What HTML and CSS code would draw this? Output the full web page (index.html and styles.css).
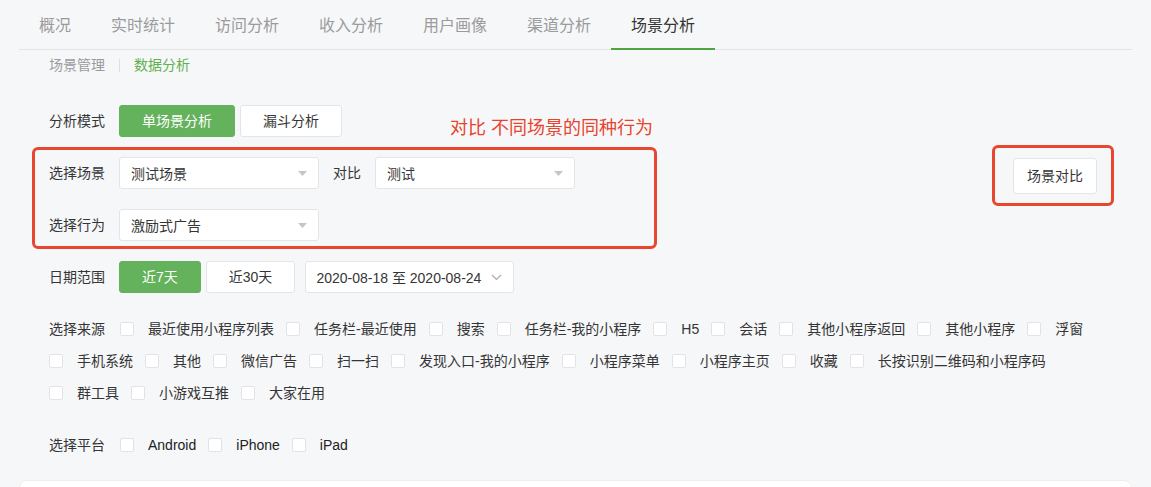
FILE: index.html
```html
<!DOCTYPE html>
<html lang="zh-CN">
<head>
<meta charset="utf-8">
<title>场景分析</title>
<link rel="stylesheet" href="styles.css">
</head>
<body>
<div class="page">
  <nav class="tabs">
    <a class="tab">概况</a>
    <a class="tab">实时统计</a>
    <a class="tab">访问分析</a>
    <a class="tab">收入分析</a>
    <a class="tab">用户画像</a>
    <a class="tab">渠道分析</a>
    <a class="tab active">场景分析</a>
  </nav>

  <div class="subnav">
    <span class="sub">场景管理</span>
    <span class="sep"></span>
    <span class="sub on">数据分析</span>
  </div>

  <div class="content">
    <div class="row mode-row">
      <span class="label">分析模式</span>
      <div class="btns">
        <button class="btn primary">单场景分析</button>
        <button class="btn">漏斗分析</button>
      </div>
      <span class="note">对比 不同场景的同种行为</span>
    </div>

    <div class="compare-row">
      <div class="mark mark-left">
        <div class="row">
          <span class="label">选择场景</span>
          <div class="select"><span>测试场景</span><svg class="caret" width="9" height="5" viewBox="0 0 9 5"><path d="M0 0h9L4.5 5z" fill="#c4c6ca"/></svg></div>
          <span class="label label-gap">对比</span>
          <div class="select"><span>测试</span><svg class="caret" width="9" height="5" viewBox="0 0 9 5"><path d="M0 0h9L4.5 5z" fill="#c4c6ca"/></svg></div>
        </div>
        <div class="row">
          <span class="label">选择行为</span>
          <div class="select"><span>激励式广告</span><svg class="caret" width="9" height="5" viewBox="0 0 9 5"><path d="M0 0h9L4.5 5z" fill="#c4c6ca"/></svg></div>
        </div>
      </div>
      <div class="mark mark-right">
        <button class="btn tall">场景对比</button>
      </div>
    </div>

    <div class="row date-row">
      <span class="label">日期范围</span>
      <div class="btns">
        <button class="btn primary">近7天</button>
        <button class="btn">近30天</button>
      </div>
      <div class="date">
        <span>2020-08-18 至 2020-08-24</span>
        <svg class="chev" width="11" height="7" viewBox="0 0 11 7"><path d="M1 1l4.5 4.5L10 1" fill="none" stroke="#a8abb0" stroke-width="1.2"/></svg>
      </div>
    </div>

    <div class="checks">
      <span class="label check-label">选择来源</span>
      <label class="opt"><span class="box"></span>最近使用小程序列表</label>
      <label class="opt"><span class="box"></span>任务栏-最近使用</label>
      <label class="opt"><span class="box"></span>搜索</label>
      <label class="opt"><span class="box"></span>任务栏-我的小程序</label>
      <label class="opt"><span class="box"></span>H5</label>
      <label class="opt"><span class="box"></span>会话</label>
      <label class="opt"><span class="box"></span>其他小程序返回</label>
      <label class="opt"><span class="box"></span>其他小程序</label>
      <label class="opt"><span class="box"></span>浮窗</label>
      <label class="opt"><span class="box"></span>手机系统</label>
      <label class="opt"><span class="box"></span>其他</label>
      <label class="opt"><span class="box"></span>微信广告</label>
      <label class="opt"><span class="box"></span>扫一扫</label>
      <label class="opt"><span class="box"></span>发现入口-我的小程序</label>
      <label class="opt"><span class="box"></span>小程序菜单</label>
      <label class="opt"><span class="box"></span>小程序主页</label>
      <label class="opt"><span class="box"></span>收藏</label>
      <label class="opt"><span class="box"></span>长按识别二维码和小程序码</label>
      <label class="opt"><span class="box"></span>群工具</label>
      <label class="opt"><span class="box"></span>小游戏互推</label>
      <label class="opt"><span class="box"></span>大家在用</label>
    </div>

    <div class="checks platform">
      <span class="label check-label">选择平台</span>
      <label class="opt latin"><span class="box"></span>Android</label>
      <label class="opt latin"><span class="box"></span>iPhone</label>
      <label class="opt latin"><span class="box"></span>iPad</label>
    </div>
  </div>

  <div class="card"></div>
</div>
</body>
</html>
```

FILE: styles.css
```css
* { box-sizing: border-box; }

html, body {
  margin: 0;
  height: 100%;
  overflow: hidden;
}

body {
  background: #f6f7f9;
  font-family: "Liberation Sans", "Noto Sans CJK SC", sans-serif;
  font-size: 14px;
  color: #353535;
}

.page {
  padding: 0 19px;
}

/* tabs */
.tabs {
  display: flex;
  border-bottom: 1px solid #e3e5e8;
  height: 50px;
}

.tab {
  display: block;
  padding: 14px 20px 10px;
  line-height: 24px;
  font-size: 16px;
  color: #9b9b9b;
  border-bottom: 2px solid transparent;
  height: 50px;
  margin-bottom: -1px;
}

.tab.active {
  color: #353535;
  border-bottom-color: #4fa640;
}

/* sub navigation */
.subnav {
  display: flex;
  align-items: center;
  padding-left: 30px;
  margin-top: 5px;
  line-height: 20px;
}

.sub {
  color: #9b9b9b;
}

.sub.on {
  color: #5fb14f;
}

.sep {
  width: 1px;
  height: 13px;
  background: #dcdee2;
  margin: 0 14px;
}

/* content */
.content {
  padding: 0 15px 0 30px;
}

.row {
  display: flex;
  align-items: center;
  height: 32px;
}

.mode-row {
  margin-top: 30px;
}

.label {
  flex: none;
  line-height: 20px;
  margin-right: 14px;
  color: #353535;
}

.label-gap {
  margin-left: 14px;
}

.btns {
  display: flex;
  gap: 5px;
}

.btn {
  font: inherit;
  height: 32px;
  padding: 0 22px;
  border: 1px solid #e3e5e8;
  border-radius: 3px;
  background: #fff;
  color: #353535;
  line-height: 30px;
}

.btn.primary {
  background: #64b25b;
  border-color: #64b25b;
  color: #fff;
}

.btn.tall {
  height: 36px;
  line-height: 34px;
  padding: 0 13px;
}

.note {
  margin-left: 108px;
  font-size: 18px;
  line-height: 24px;
  color: #e8432d;
  align-self: flex-end;
  margin-bottom: -3px;
}

/* annotated comparison area */
.compare-row {
  display: flex;
  align-items: flex-start;
  margin-top: 10px;
}

.mark {
  border: 3px solid #e8462f;
  border-radius: 6px;
}

.mark-left {
  width: 625px;
  margin-left: -17px;
  padding: 7px 0 5px 14px;
  display: flex;
  flex-direction: column;
  gap: 20px;
}

.mark-right {
  margin-left: auto;
  margin-right: 3px;
  margin-top: -2px;
  padding: 10px 14px 9px 18px;
}

.select {
  width: 200px;
  height: 32px;
  background: #fff;
  border: 1px solid #e3e5e8;
  border-radius: 3px;
  display: flex;
  align-items: center;
  justify-content: space-between;
  padding: 0 11px 0 11px;
  color: #353535;
}

.caret {
  flex: none;
}

/* date */
.date-row {
  margin-top: 12px;
}

.date {
  margin-left: 10px;
  width: 209px;
  height: 32px;
  background: #fff;
  border: 1px solid #e3e5e8;
  border-radius: 3px;
  display: flex;
  align-items: center;
  justify-content: space-between;
  padding: 0 11px 0 10px;
  color: #353535;
}

.chev {
  flex: none;
}

/* checkboxes */
.checks {
  display: flex;
  flex-wrap: wrap;
  column-gap: 12px;
  row-gap: 12px;
  margin-top: 26px;
  line-height: 20px;
}

.check-label {
  margin-right: 3px;
}

.opt {
  display: flex;
  align-items: center;
  gap: 14px;
  color: #353535;
  white-space: nowrap;
}

.latin {
  color: #222;
}

.box {
  width: 14px;
  height: 14px;
  background: #fff;
  border: 1px solid #e1e3e6;
  border-radius: 2px;
  flex: none;
}

.platform {
  margin-top: 32px;
}

/* bottom card */
.card {
  margin-top: 25px;
  height: 60px;
  background: #fff;
  border: 1px solid #eceef1;
  border-radius: 8px 8px 0 0;
}
```
